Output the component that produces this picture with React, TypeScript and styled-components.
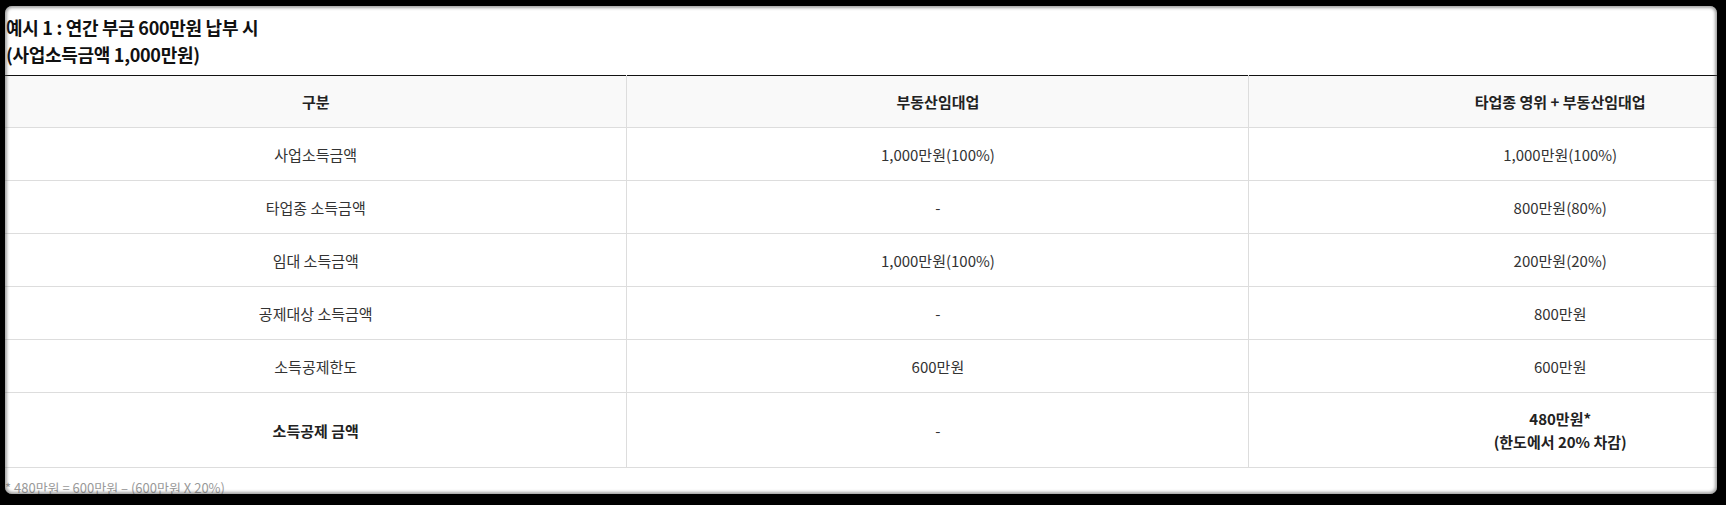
import React from "react";
import styled, { createGlobalStyle } from "styled-components";

const Global = createGlobalStyle`
  html, body {
    margin: 0;
    padding: 0;
    background: #ffffff;
    overflow: hidden;
  }
  body {
    font-family: "Noto Sans CJK KR", "Noto Sans", sans-serif;
    color: #333;
  }
`;

const Page = styled.div`
  position: relative;
  width: 1726px;
  height: 505px;
  overflow: hidden;
`;

const Content = styled.div`
  width: 1866px;
  padding: 14px 0 0 5px;
`;

const Title = styled.h3`
  margin: 0 0 7px 1px;
  font-size: 18px;
  line-height: 27px;
  font-weight: 700;
  color: #111;
  letter-spacing: -0.3px;
`;

const Table = styled.table`
  width: 1866px;
  table-layout: fixed;
  border-collapse: collapse;
  border-top: 1px solid #111;
`;

const HeadCell = styled.th`
  height: 51px;
  padding: 0 10px;
  background: #f9f9f9;
  border-bottom: 1px solid #ddd;
  border-left: 1px solid #ddd;
  font-size: 15px;
  font-weight: 700;
  color: #222;
  text-align: center;
  &:first-child { border-left: none; }
`;

const Cell = styled.td<{ $strong?: boolean; $tall?: boolean }>`
  height: ${(p) => (p.$tall ? 74 : 52)}px;
  padding: 0 10px;
  border-bottom: 1px solid #ddd;
  border-left: 1px solid #ddd;
  font-size: 15px;
  line-height: 23px;
  font-weight: ${(p) => (p.$strong ? 700 : 400)};
  color: ${(p) => (p.$strong ? "#222" : "#333")};
  text-align: center;
  vertical-align: middle;
  &:first-child { border-left: none; }
`;

const Note = styled.p`
  margin: 10px 0 0 0;
  font-size: 13px;
  line-height: 20px;
  color: #999;
`;

const Frame = styled.div`
  position: absolute;
  top: 6px;
  left: 5px;
  right: 9px;
  bottom: 11px;
  border-radius: 7px;
  pointer-events: none;
  box-shadow: 0 0 0 80px #000, inset 0 0 3px 2px rgba(90, 90, 90, 0.55);
`;

const rows: { label: string; a: string; b: string }[] = [
  { label: "사업소득금액", a: "1,000만원(100%)", b: "1,000만원(100%)" },
  { label: "타업종 소득금액", a: "-", b: "800만원(80%)" },
  { label: "임대 소득금액", a: "1,000만원(100%)", b: "200만원(20%)" },
  { label: "공제대상 소득금액", a: "-", b: "800만원" },
  { label: "소득공제한도", a: "600만원", b: "600만원" },
];

export default function App() {
  return (
    <>
      <Global />
      <Page>
        <Content>
          <Title>
            예시 1 : 연간 부금 600만원 납부 시
            <br />
            (사업소득금액 1,000만원)
          </Title>
          <Table>
            <colgroup>
              <col style={{ width: "33.33%" }} />
              <col style={{ width: "33.33%" }} />
              <col style={{ width: "33.34%" }} />
            </colgroup>
            <thead>
              <tr>
                <HeadCell>구분</HeadCell>
                <HeadCell>부동산임대업</HeadCell>
                <HeadCell>타업종 영위 + 부동산임대업</HeadCell>
              </tr>
            </thead>
            <tbody>
              {rows.map((r) => (
                <tr key={r.label}>
                  <Cell>{r.label}</Cell>
                  <Cell>{r.a}</Cell>
                  <Cell>{r.b}</Cell>
                </tr>
              ))}
              <tr>
                <Cell $strong $tall>소득공제 금액</Cell>
                <Cell $tall>-</Cell>
                <Cell $strong $tall>
                  480만원*
                  <br />
                  (한도에서 20% 차감)
                </Cell>
              </tr>
            </tbody>
          </Table>
          <Note>* 480만원 = 600만원 – (600만원 X 20%)</Note>
        </Content>
        <Frame />
      </Page>
    </>
  );
}
